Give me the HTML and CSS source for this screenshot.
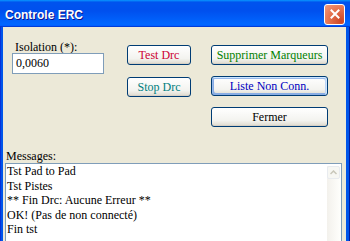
FILE: index.html
```html
<!DOCTYPE HTML>
<html>
<head>
<title>Controle ERC</title>
<link rel="stylesheet" href="styles.css">
</head>
<body>
<div class="window">
    <div class="titlebar">
        <span class="title">Controle ERC</span>
        <span class="close">
            <svg width="10" height="10" viewBox="0 0 10 10">
                <path d="M1.5 1.5 L8.5 8.5 M8.5 1.5 L1.5 8.5" stroke="#fff" stroke-width="2" stroke-linecap="square"/>
            </svg>
        </span>
    </div>
    <div class="client">
        <div class="top">
            <div class="field">
                <label class="caption">Isolation (*):</label>
                <div class="edit">0,0060</div>
            </div>
            <div class="col col-mid">
                <button class="btn red">Test Drc</button>
                <button class="btn teal">Stop Drc</button>
            </div>
            <div class="col col-right">
                <button class="btn green">Supprimer Marqueurs</button>
                <button class="btn blue default">Liste Non Conn.</button>
                <button class="btn">Fermer</button>
            </div>
        </div>
        <div class="messages">
            <div class="caption">Messages:</div>
            <div class="listbox">
                <ul class="lines">
                    <li>Tst Pad to Pad</li>
                    <li>Tst Pistes</li>
                    <li>** Fin Drc: Aucune Erreur **</li>
                    <li>OK! (Pas de non connecté)</li>
                    <li>Fin tst</li>
                </ul>
                <div class="scrollbar">
                    <div class="scroll-up">
                        <svg width="7" height="5" viewBox="0 0 7 5">
                            <path d="M0.5 4 L3.5 1 L6.5 4" fill="none" stroke="#c9c7ba" stroke-width="1.5"/>
                        </svg>
                    </div>
                </div>
            </div>
        </div>
    </div>
</div>
</body>
</html>
```
FILE: styles.css
```css
html, body {
    margin: 0;
    height: 100%;
}
body {
    font-family: "Liberation Serif", "Times New Roman", serif;
    font-size: 12px;
    color: #000;
    background: #ece9d8;
}
.window {
    width: 350px;
    height: 241px;
    display: flex;
    flex-direction: column;
    background: #0055ea;
    box-shadow: inset 1px 0 #0831d9, inset -1px 0 #001ea0;
    overflow: hidden;
}
.titlebar {
    height: 27px;
    flex: none;
    display: flex;
    align-items: center;
    justify-content: space-between;
    padding: 0 5px 0 5px;
    background: linear-gradient(180deg, #0997ff, #0053ee 8%, #0050ee 40%, #06f 88%, #06f 93%, #005bff 95%, #003dd7 96%, #003dd7);
}
.title {
    font-family: "Liberation Sans", Arial, sans-serif;
    font-weight: bold;
    font-size: 12px;
    color: #fff;
    text-shadow: 1px 1px #0f1089;
    padding-top: 2px;
}
.close {
    width: 19px;
    height: 19px;
    border: 1px solid #fff;
    border-radius: 3px;
    display: flex;
    align-items: center;
    justify-content: center;
    background: radial-gradient(circle at 85% 85%, #cc4625, #e5734f 55%, #f19b7f);
    margin-top: 1px;
}
.client {
    flex: 1;
    margin: 0 4px 0 3px;
    background: #ece9d8;
    display: flex;
    flex-direction: column;
    overflow: hidden;
}
.top {
    display: flex;
    align-items: flex-start;
    padding: 13px 0 0 9px;
}
.field {
    width: 92px;
    display: flex;
    flex-direction: column;
}
.caption {
    display: block;
    line-height: 14px;
    padding-left: 3px;
}
.edit {
    height: 19px;
    margin-top: -1px;
    border: 1px solid #7f9db9;
    background: #fff;
    line-height: 19px;
    padding-left: 3px;
}
.col {
    display: flex;
    flex-direction: column;
    gap: 12px;
    padding-top: 5px;
}
.col-mid {
    width: 64px;
    margin-left: 23px;
}
.col-right {
    width: 117px;
    margin-left: 20px;
    gap: 11px;
}
.btn {
    height: 20px;
    padding: 0;
    font: inherit;
    color: #000;
    border: 1px solid #003c74;
    border-radius: 3px;
    background: linear-gradient(180deg, #fff, #f3f3ef 70%, #e3e0d6 92%, #d6d0c5);
    box-shadow: inset 0 -1px #d6d0c5;
}
.red { color: #cc0033; }
.teal { color: #008080; }
.green { color: #008000; }
.blue { color: #0000c0; }
.default {
    box-shadow: inset -1px 1px #cee7ff, inset 1px 2px #98b8ea, inset -2px 2px #bcd4f6, inset 1px -1px #89ade4, inset 2px -2px #89ade4;
}
.messages {
    margin-top: 22px;
    flex: 1;
    display: flex;
    flex-direction: column;
}
.messages .caption {
    padding-left: 3px;
    line-height: 14px;
}
.listbox {
    flex: 1;
    margin: 0 0 -4px 2px;
    width: 335px;
    border: 1px solid #7f9db9;
    background: #fff;
    display: flex;
}
.lines {
    list-style: none;
    margin: 0;
    padding: 0 0 0 1px;
    flex: 1;
}
.lines li {
    line-height: 14.5px;
}
.scrollbar {
    width: 13px;
    margin: 2px 1px 0 0;
    background: linear-gradient(90deg, #f3f1ec, #fefefb);
}
.scroll-up {
    height: 13px;
    display: flex;
    align-items: center;
    justify-content: center;
    border: 1px solid #e8ebef;
    border-radius: 2px;
    box-sizing: border-box;
    background: #f7f7f3;
}
```
